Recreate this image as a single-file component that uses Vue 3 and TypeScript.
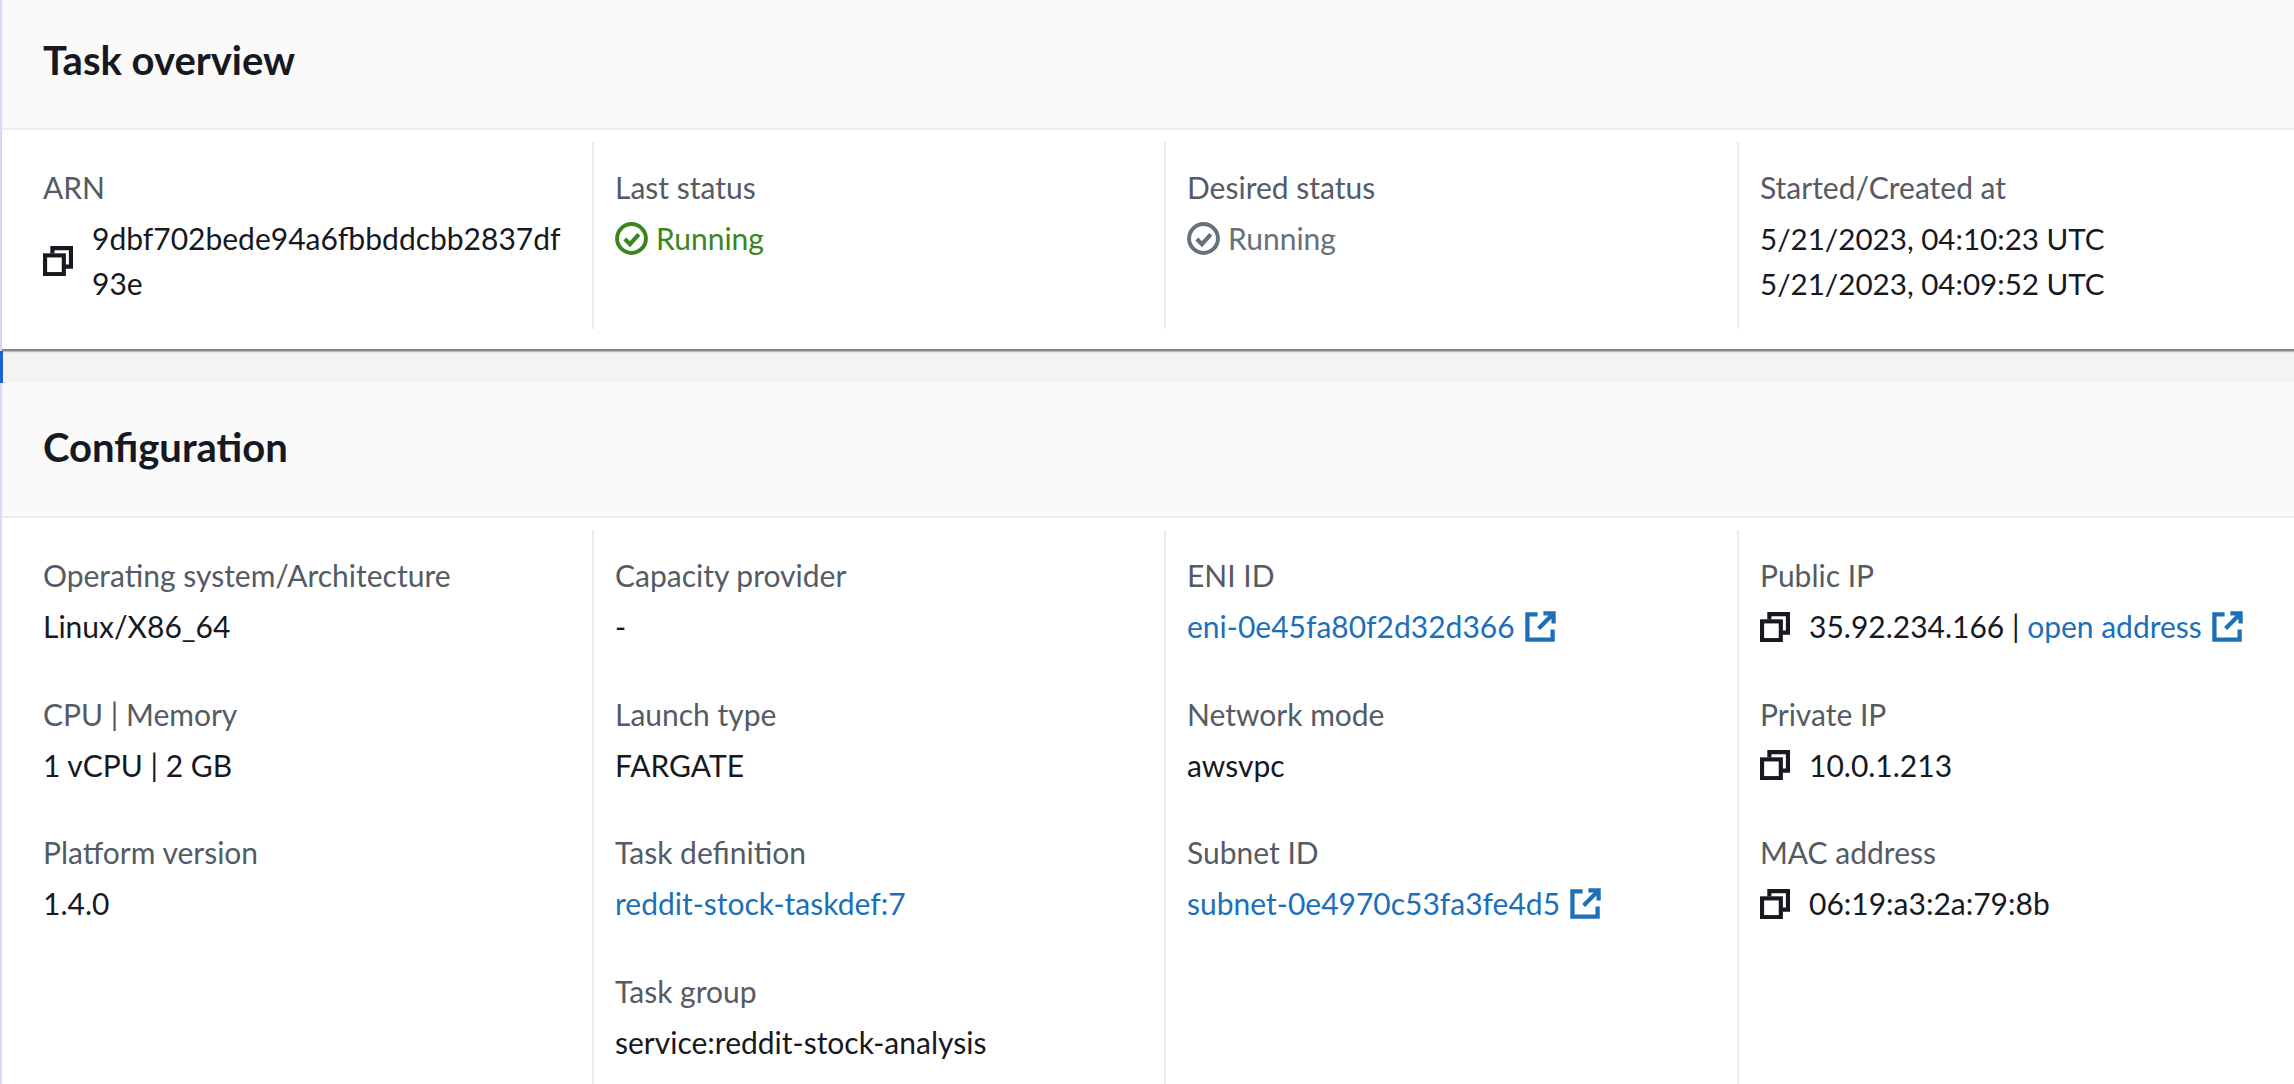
<script setup lang="ts">
type Item = {
  label: string;
  text?: string;
  link?: string;
  copy?: boolean;
  ext?: boolean;
};

const configColumns: Item[][] = [
  [
    { label: 'Operating system/Architecture', text: 'Linux/X86_64' },
    { label: 'CPU | Memory', text: '1 vCPU | 2 GB' },
    { label: 'Platform version', text: '1.4.0' },
  ],
  [
    { label: 'Capacity provider', text: '-' },
    { label: 'Launch type', text: 'FARGATE' },
    { label: 'Task definition', link: 'reddit-stock-taskdef:7' },
    { label: 'Task group', text: 'service:reddit-stock-analysis' },
  ],
  [
    { label: 'ENI ID', link: 'eni-0e45fa80f2d32d366', ext: true },
    { label: 'Network mode', text: 'awsvpc' },
    { label: 'Subnet ID', link: 'subnet-0e4970c53fa3fe4d5', ext: true },
  ],
  [
    { label: 'Public IP', text: '35.92.234.166 | ', link: 'open address', copy: true, ext: true },
    { label: 'Private IP', text: '10.0.1.213', copy: true },
    { label: 'MAC address', text: '06:19:a3:2a:79:8b', copy: true },
  ],
];
</script>

<template>
  <div class="page">
    <section class="panel">
      <header class="panel-head first"><h2>Task overview</h2></header>
      <div class="columns overview">
        <div class="col">
          <div class="label">ARN</div>
          <div class="value arn">
            <svg class="icon copy" viewBox="0 0 32 32" fill="none" stroke="currentColor" stroke-width="4.4">
              <rect x="2.2" y="10" width="20" height="20" />
              <path d="M10 8V2.2h19.8V22h-6" />
            </svg>
            <span class="arn-text">9dbf702bede94a6fbbddcbb2837df93e</span>
          </div>
        </div>
        <div class="col">
          <div class="label">Last status</div>
          <div class="value status ok">
            <svg class="icon" viewBox="0 0 32 32" fill="none" stroke="currentColor">
              <circle cx="16" cy="16" r="14" stroke-width="3.8" />
              <path d="M9.5 16.5l5 5 8.5-9.5" stroke-width="4" />
            </svg>
            <span>Running</span>
          </div>
        </div>
        <div class="col">
          <div class="label">Desired status</div>
          <div class="value status dim">
            <svg class="icon" viewBox="0 0 32 32" fill="none" stroke="currentColor">
              <circle cx="16" cy="16" r="14" stroke-width="3.8" />
              <path d="M9.5 16.5l5 5 8.5-9.5" stroke-width="4" />
            </svg>
            <span>Running</span>
          </div>
        </div>
        <div class="col">
          <div class="label">Started/Created at</div>
          <div class="value date">5/21/2023, 04:10:23 UTC</div>
          <div class="value date">5/21/2023, 04:09:52 UTC</div>
        </div>
      </div>
    </section>

    <div class="gap"></div>

    <section class="panel">
      <header class="panel-head"><h2>Configuration</h2></header>
      <div class="columns config">
        <div v-for="(col, i) in configColumns" :key="i" class="col">
          <div v-for="item in col" :key="item.label" class="field">
            <div class="label">{{ item.label }}</div>
            <div class="value">
              <svg v-if="item.copy" class="icon copy" viewBox="0 0 32 32" fill="none" stroke="currentColor" stroke-width="4.4">
                <rect x="2.2" y="10" width="20" height="20" />
                <path d="M10 8V2.2h19.8V22h-6" />
              </svg>
              <span v-if="item.text" class="txt">{{ item.text }}</span>
              <a v-if="item.link" class="link">{{ item.link }}</a>
              <svg v-if="item.ext" class="icon ext" viewBox="0 0 32 32" fill="none" stroke="currentColor" stroke-width="4.4">
                <path d="M13 3.5H2.5v26h26V19" />
                <path d="M19 2.5h10.5V13M29 3L14 18" />
              </svg>
            </div>
          </div>
        </div>
      </div>
    </section>
  </div>
</template>

<style>
html, body {
  margin: 0;
  background: #fff;
  overflow: hidden;
}
</style>

<style scoped>
.page {
  width: 2294px;
  height: 1084px;
  overflow: hidden;
  font-family: Lato, sans-serif;
  font-size: 30px;
  color: #16191f;
  background: #fff;
}

.panel {
  border-left: 2px solid #d5dcf3;
}

.panel-head {
  height: 135px;
  box-sizing: border-box;
  display: flex;
  align-items: center;
  padding-left: 41px;
  padding-bottom: 5px;
  background: #fafafa;
  border-bottom: 2px solid #eaeded;
}

.panel-head.first {
  height: 130px;
  padding-bottom: 8px;
}

.panel-head h2 {
  margin: 0;
  font-size: 40px;
  font-weight: 700;
  color: #16191f;
}

.columns {
  display: grid;
  grid-template-columns: 590px 572px 573px 1fr;
}

.overview {
  position: relative;
  height: 221px;
  box-sizing: border-box;
  padding: 12px 0 20px;
  border-bottom: 2px solid #7f8a90;
  box-shadow: 0 1px 1px rgba(84, 91, 100, 0.35);
}

.config {
  padding-top: 12px;
}

.col {
  padding-left: 21px;
  border-left: 2px solid #eaeded;
}

.col:first-child {
  padding-left: 41px;
  border-left: 0;
}

.overview .col {
  padding-top: 28px;
}

.config .col {
  padding-top: 28px;
  height: 600px;
}

.field {
  height: 138.5px;
}

.label {
  height: 34px;
  margin-bottom: 12px;
  line-height: 34px;
  color: #545b64;
}

.value {
  display: flex;
  align-items: center;
  min-height: 45px;
  line-height: 45px;
  white-space: pre;
}

.date {
  font-size: 29.6px;
}

.arn {
  white-space: normal;
}

.arn-text {
  width: 480px;
  word-break: break-all;
}

.icon {
  width: 33px;
  height: 33px;
  flex: none;
}

.copy {
  width: 30px;
  height: 30px;
  margin-right: 19px;
}

.ext {
  width: 31px;
  height: 31px;
  margin-left: 10px;
  color: #1d6fb8;
}

.status .icon {
  margin-right: 8px;
}

.ok {
  color: #3a8520;
}

.dim {
  color: #687078;
}

.link {
  color: #1d6fb8;
}

.gap {
  height: 32px;
  background: #f2f3f3;
  border-left: 3px solid #1f5fd0;
}
</style>
